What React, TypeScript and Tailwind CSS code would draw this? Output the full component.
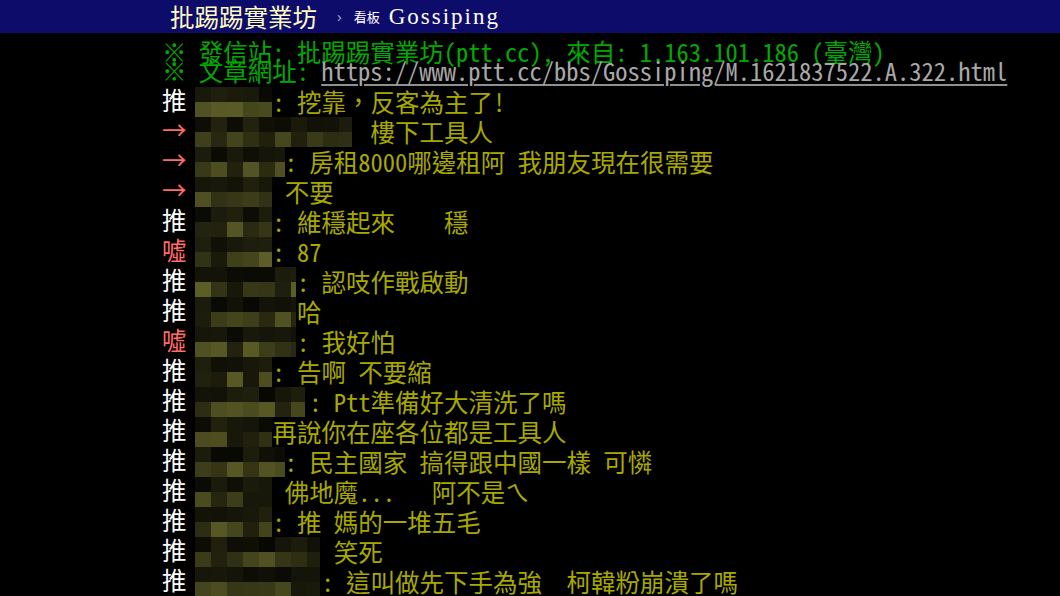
import React from "react";

type Row = { tag: string; red: boolean; mw: number; col: number; text: string; seed: number };

const rows: Row[] = [
  { tag: "推", red: false, mw: 77, col: 6, text: ": 挖靠，反客為主了!", seed: 3 },
  { tag: "→", red: true, mw: 157, col: 14, text: "樓下工具人", seed: 7 },
  { tag: "→", red: true, mw: 90, col: 7, text: ": 房租8000哪邊租阿 我朋友現在很需要", seed: 11 },
  { tag: "→", red: true, mw: 77, col: 7, text: "不要", seed: 13 },
  { tag: "推", red: false, mw: 77, col: 6, text: ": 維穩起來    穩", seed: 17 },
  { tag: "噓", red: true, mw: 77, col: 6, text: ": 87", seed: 19 },
  { tag: "推", red: false, mw: 101, col: 8, text: ": 認吱作戰啟動", seed: 23 },
  { tag: "推", red: false, mw: 101, col: 8, text: "哈", seed: 29 },
  { tag: "噓", red: true, mw: 101, col: 8, text: ": 我好怕", seed: 31 },
  { tag: "推", red: false, mw: 77, col: 6, text: ": 告啊 不要縮", seed: 37 },
  { tag: "推", red: false, mw: 110, col: 9, text: ": Ptt準備好大清洗了嗎", seed: 41 },
  { tag: "推", red: false, mw: 77, col: 6, text: "再說你在座各位都是工具人", seed: 43 },
  { tag: "推", red: false, mw: 90, col: 7, text: ": 民主國家 搞得跟中國一樣 可憐", seed: 47 },
  { tag: "推", red: false, mw: 77, col: 7, text: "佛地魔...   阿不是ㄟ", seed: 53 },
  { tag: "推", red: false, mw: 77, col: 6, text: ": 推 媽的一堆五毛", seed: 59 },
  { tag: "推", red: false, mw: 125, col: 11, text: "笑死", seed: 61 },
  { tag: "推", red: false, mw: 125, col: 10, text: ": 這叫做先下手為強  柯韓粉崩潰了嗎", seed: 67 },
];

function runs(text: string) {
  const out: { ascii: boolean; s: string }[] = [];
  for (const ch of text) {
    const a = ch.charCodeAt(0) < 128;
    const last = out[out.length - 1];
    if (last && last.ascii === a) last.s += ch;
    else out.push({ ascii: a, s: ch });
  }
  return out;
}

function T({ text, tight }: { text: string; tight?: boolean }) {
  const lh = tight ? "leading-[21px]" : "leading-none";
  return (
    <>
      {runs(text).map((r, i) =>
        r.ascii ? (
          <span
            key={i}
            className={`whitespace-pre font-['Noto_Sans_Mono_CJK_TC','Liberation_Mono',monospace] text-[24.5px] ${lh}`}
          >
            {r.s}
          </span>
        ) : (
          <span key={i} className={`whitespace-pre font-['Noto_Sans_CJK_TC',sans-serif] text-[24.5px] ${lh}`}>
            {r.s}
          </span>
        )
      )}
    </>
  );
}

function rng(seed: number) {
  let s = seed * 1013 + 7;
  return () => {
    s = (s * 9301 + 49297) % 233280;
    return s / 233280;
  };
}

function Mosaic({ w, seed }: { w: number; seed: number }) {
  const r = rng(seed);
  const n = Math.ceil(w / 16);
  const row = (lo: number, hi: number) =>
    Array.from({ length: n }, () => {
      const k = Math.round(lo + r() * (hi - lo));
      return `rgb(${k},${k},${Math.round(k * 0.42)})`;
    });
  const top = row(8, 34);
  const bot = row(22, 95);
  return (
    <div className="flex h-[30px] shrink-0 flex-col overflow-hidden" style={{ width: w }}>
      {[top, bot].map((cells, j) => (
        <div key={j} className="flex h-[15px]">
          {cells.map((c, i) => (
            <div key={i} className="h-[15px] w-[16px] shrink-0" style={{ background: c }} />
          ))}
        </div>
      ))}
    </div>
  );
}

export default function App() {
  return (
    <div className="h-[596px] w-[1060px] overflow-hidden bg-black">
      <div className="flex h-[33px] items-center bg-[#0e0c6b] pl-[170px]">
        <span className="font-['Noto_Sans_CJK_TC',sans-serif] text-[24.5px] leading-[30px] text-[#fffcc0]">
          批踢踢實業坊
        </span>
        <span className="ml-[20px] font-['Liberation_Sans',sans-serif] text-[14px] leading-none text-[#b0b0c8]">›</span>
        <span className="ml-[12px] font-['Noto_Sans_CJK_TC',sans-serif] text-[13px] leading-none text-white">看板</span>
        <span className="ml-[9px] font-['Liberation_Serif',serif] text-[23px] leading-[30px] tracking-[2px] text-white">
          Gossiping
        </span>
      </div>
      <div className="pl-[162px] pt-[7px]">
        <div className="flex h-[22px] items-center text-[#00aa00]">
          <T tight text="※ 發信站: 批踢踢實業坊(ptt.cc), 來自: 1.163.101.186 (臺灣)" />
        </div>
        <div className="mb-[2px] flex h-[23px] items-center">
          <span className="text-[#00aa00]">
            <T tight text="※ 文章網址: " />
          </span>
          <span className="text-[#a8a8a8] underline decoration-[#909090] decoration-2 underline-offset-[3px]">
            <T tight text="https://www.ptt.cc/bbs/Gossiping/M.1621837522.A.322.html" />
          </span>
        </div>
        {rows.map((row, i) => (
          <div key={i} className="flex h-[30px] items-center">
            <div className={`w-[33px] shrink-0 ${row.red ? "text-[#ff6a6a]" : "text-white"}`}>
              <T text={row.tag} />
            </div>
            <Mosaic w={row.mw} seed={row.seed} />
            <div
              className="flex items-center text-[#a8a800]"
              style={{ marginLeft: 199 + row.col * 12.25 - 195 - row.mw }}
            >
              <T text={row.text} />
            </div>
          </div>
        ))}
      </div>
    </div>
  );
}
